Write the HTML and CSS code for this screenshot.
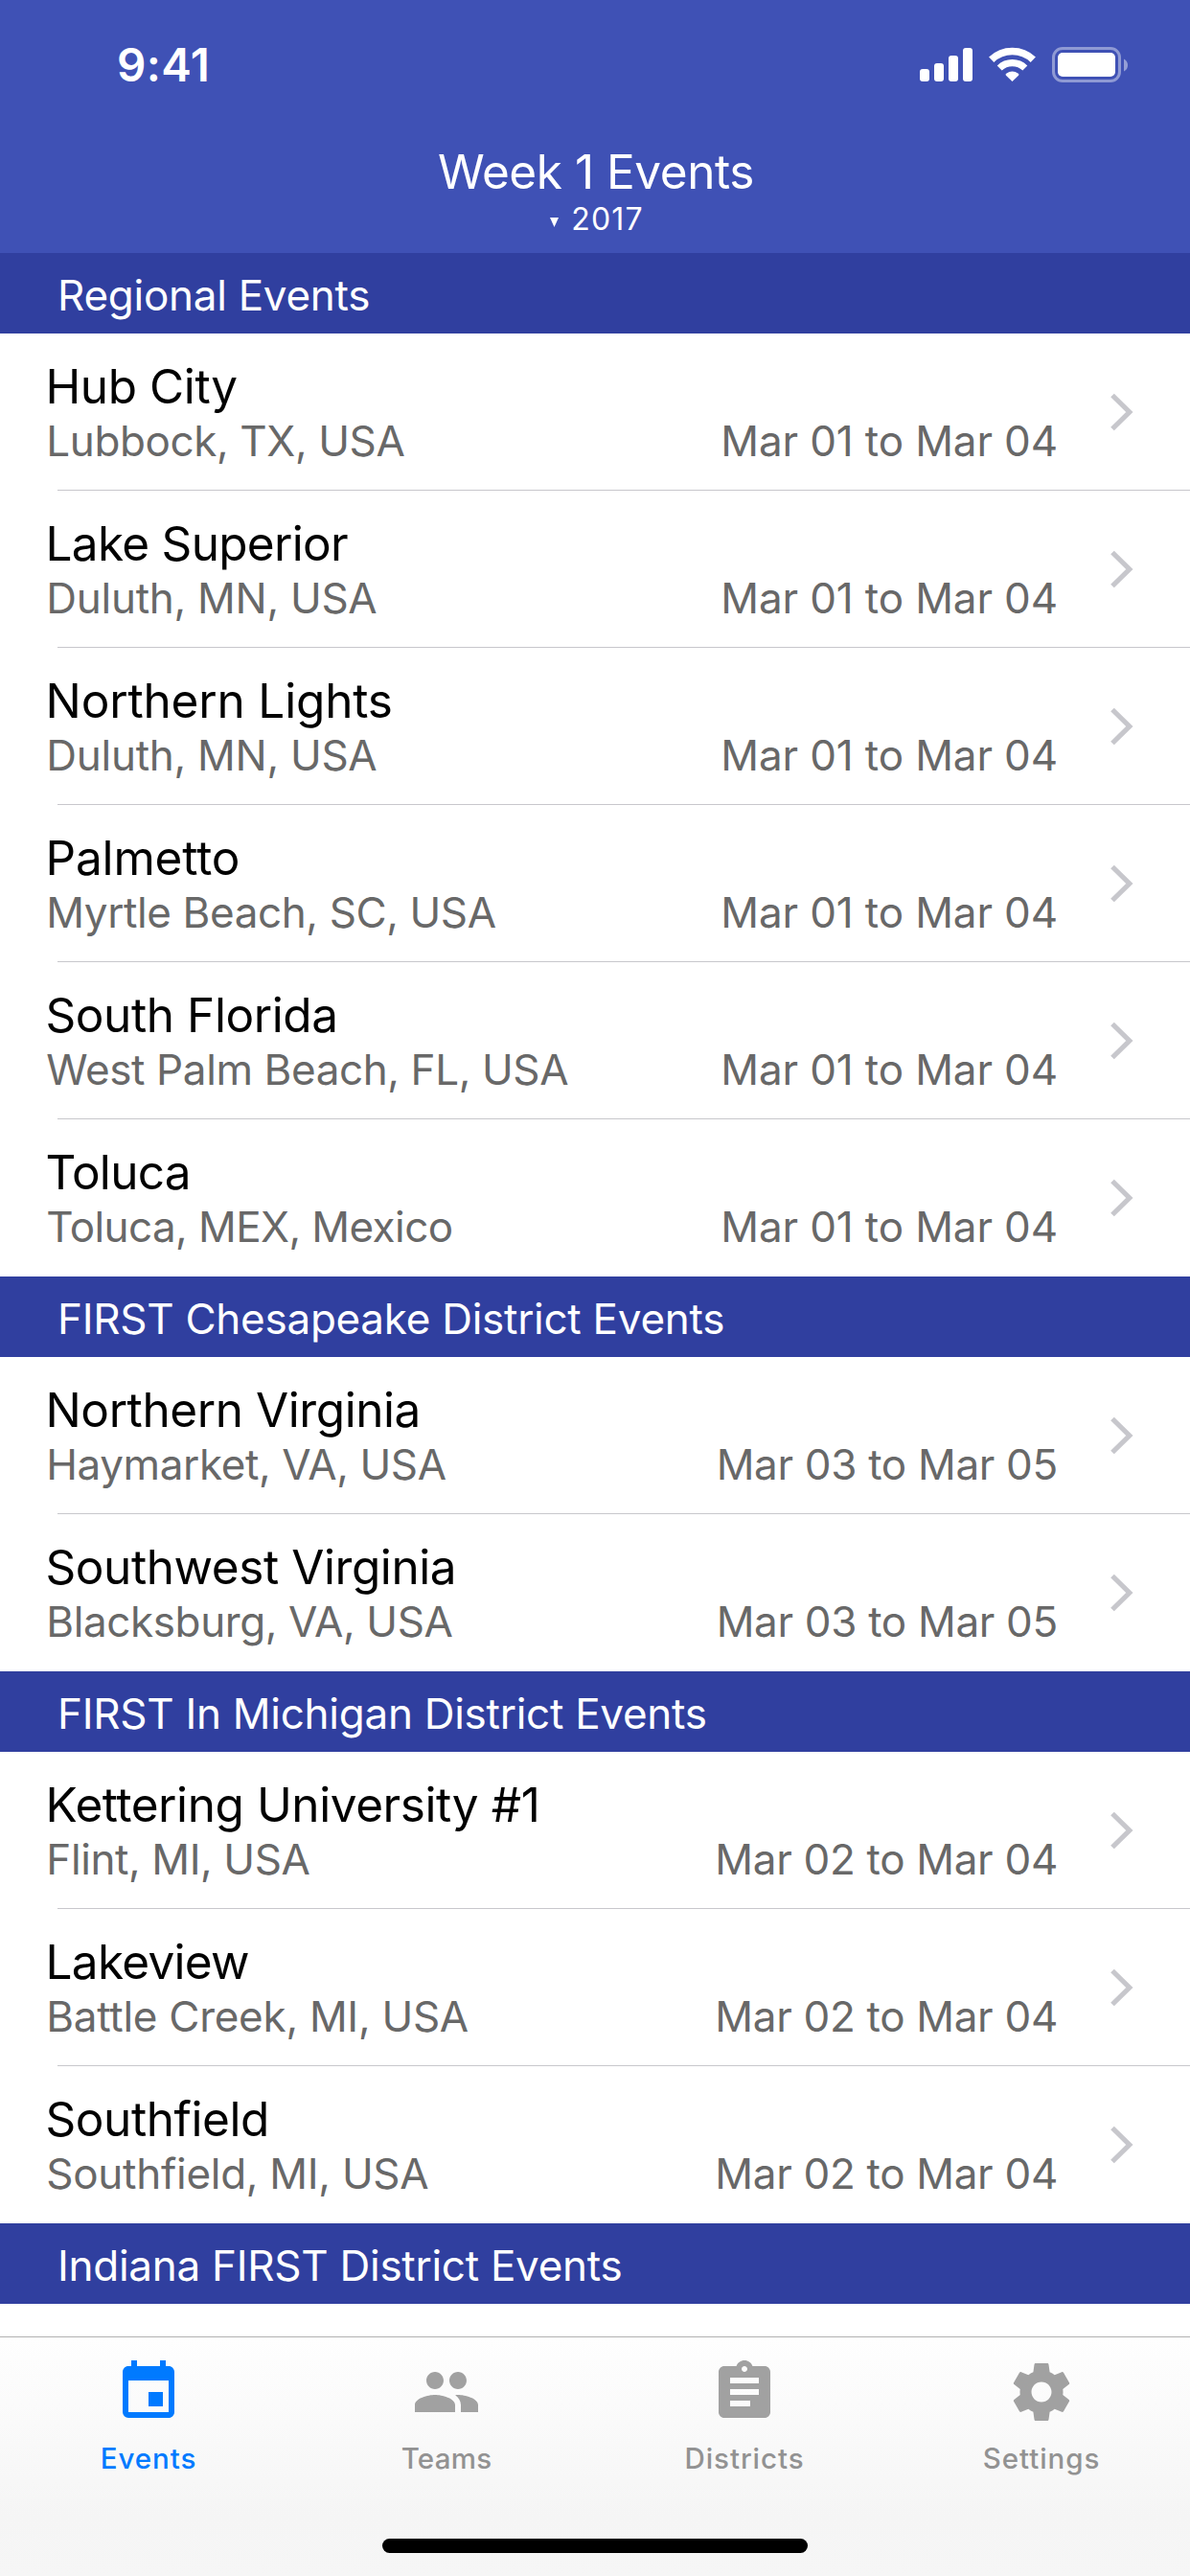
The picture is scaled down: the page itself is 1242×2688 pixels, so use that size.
FILE: index.html
```
<!DOCTYPE html>
<html lang="en">
<head>
<meta charset="utf-8">
<title>Week 1 Events</title>
<link rel="stylesheet" href="styles.css">
</head>
<body>
<svg width="0" height="0" class="defs" aria-hidden="true">
  <symbol id="chevron" viewBox="0 0 24 40"><path d="M2 2.5 19.8 20 2 37.5" fill="none" stroke="currentColor" stroke-width="5.2"/></symbol>
</svg>
<div class="screen">
  <header class="header">
    <div class="status">
      <div class="time">9:41</div>
      <svg class="indicators" width="218" height="38" viewBox="0 0 218 38">
        <g fill="#fff">
          <rect x="0" y="23" width="10" height="13" rx="3"/>
          <rect x="15" y="17" width="10" height="19" rx="3"/>
          <rect x="30" y="9" width="10" height="27" rx="3"/>
          <rect x="45" y="1" width="10" height="35" rx="3"/>
          <path d="M96.500 36 90 29.800Q88.900 28.700 90.200 27.700Q96.500 23.300 102.800 27.700Q104.100 28.700 103 29.800Z"/>
        </g>
        <g fill="none" stroke="#fff">
          <path d="M74.700 13.200A31.500 31.500 0 0 1 118.300 13.200" stroke-width="7.600"/>
          <path d="M83.200 22A19.300 19.300 0 0 1 109.800 22" stroke-width="7.200"/>
        </g>
        <rect x="139.500" y="1.500" width="69" height="34" rx="9.500" fill="none" stroke="#fff" stroke-opacity=".42" stroke-width="3"/>
        <rect x="144" y="6" width="60" height="25" rx="5" fill="#fff"/>
        <path d="M213 12.500Q217 14.500 217 19T213 25.500Z" fill="#fff" fill-opacity=".45"/>
      </svg>
    </div>
    <h1 class="title">Week 1 Events</h1>
    <div class="year"><svg width="9" height="10" viewBox="0 0 9 10"><path d="M0 0h9L4.500 10z" fill="#fff"/></svg><span>2017</span></div>
  </header>

  <main class="list">
    <h2 class="section">Regional Events</h2>
    <ul>
      <li class="row"><span class="name">Hub City</span><div class="meta"><span>Lubbock, TX, USA</span><span class="date wide">Mar 01 to Mar 04</span></div><svg class="chevron"><use href="#chevron"/></svg></li>
      <li class="row"><span class="name tight">Lake Superior</span><div class="meta"><span class="loose">Duluth, MN, USA</span><span class="date wide">Mar 01 to Mar 04</span></div><svg class="chevron"><use href="#chevron"/></svg></li>
      <li class="row"><span class="name loose">Northern Lights</span><div class="meta"><span class="loose">Duluth, MN, USA</span><span class="date wide">Mar 01 to Mar 04</span></div><svg class="chevron"><use href="#chevron"/></svg></li>
      <li class="row"><span class="name loose">Palmetto</span><div class="meta"><span>Myrtle Beach, SC, USA</span><span class="date wide">Mar 01 to Mar 04</span></div><svg class="chevron"><use href="#chevron"/></svg></li>
      <li class="row"><span class="name">South Florida</span><div class="meta"><span>West Palm Beach, FL, USA</span><span class="date wide">Mar 01 to Mar 04</span></div><svg class="chevron"><use href="#chevron"/></svg></li>
      <li class="row"><span class="name tight">Toluca</span><div class="meta"><span class="snug">Toluca, MEX, Mexico</span><span class="date wide">Mar 01 to Mar 04</span></div><svg class="chevron"><use href="#chevron"/></svg></li>
    </ul>
    <h2 class="section">FIRST Chesapeake District Events</h2>
    <ul>
      <li class="row"><span class="name">Northern Virginia</span><div class="meta"><span>Haymarket, VA, USA</span><span class="date">Mar 03 to Mar 05</span></div><svg class="chevron"><use href="#chevron"/></svg></li>
      <li class="row"><span class="name">Southwest Virginia</span><div class="meta"><span>Blacksburg, VA, USA</span><span class="date">Mar 03 to Mar 05</span></div><svg class="chevron"><use href="#chevron"/></svg></li>
    </ul>
    <h2 class="section">FIRST In Michigan District Events</h2>
    <ul>
      <li class="row"><span class="name">Kettering University #1</span><div class="meta"><span>Flint, MI, USA</span><span class="date">Mar 02 to Mar 04</span></div><svg class="chevron"><use href="#chevron"/></svg></li>
      <li class="row"><span class="name tight">Lakeview</span><div class="meta"><span class="loose">Battle Creek, MI, USA</span><span class="date">Mar 02 to Mar 04</span></div><svg class="chevron"><use href="#chevron"/></svg></li>
      <li class="row"><span class="name">Southfield</span><div class="meta"><span class="loose">Southfield, MI, USA</span><span class="date">Mar 02 to Mar 04</span></div><svg class="chevron"><use href="#chevron"/></svg></li>
    </ul>
    <h2 class="section">Indiana FIRST District Events</h2>
  </main>

  <footer class="footer">
    <nav class="tabs">
      <a class="tab active"><svg viewBox="0 0 24 24"><path d="M17 12h-5v5h5zM16 1v2H8V1H6v2H5c-1.110 0-1.990.9-1.990 2L3 19a2 2 0 0 0 2 2h14c1.100 0 2-.9 2-2V5c0-1.100-.9-2-2-2h-1V1h-2zm3 18H5V8h14v11z" /></svg><span>Events</span></a>
      <a class="tab"><svg viewBox="0 0 24 24"><path d="M16 11c1.660 0 2.990-1.340 2.990-3S17.660 5 16 5c-1.660 0-3 1.340-3 3s1.340 3 3 3zm-8 0c1.660 0 2.990-1.340 2.990-3S9.660 5 8 5C6.340 5 5 6.340 5 8s1.340 3 3 3zm0 2c-2.330 0-7 1.170-7 3.500V19h14v-2.500c0-2.330-4.670-3.500-7-3.500zm8 0c-.29 0-.62.020-.97.050 1.160.84 1.970 1.970 1.970 3.450V19h6v-2.500c0-2.330-4.670-3.500-7-3.500z"/></svg><span class="plain">Teams</span></a>
      <a class="tab"><svg viewBox="0 0 24 24"><path d="M19 3h-4.180C14.400 1.840 13.300 1 12 1c-1.300 0-2.400.84-2.820 2H5c-1.100 0-2 .9-2 2v14c0 1.100.9 2 2 2h14c1.100 0 2-.9 2-2V5c0-1.100-.9-2-2-2zm-7 0c.55 0 1 .45 1 1s-.45 1-1 1-1-.45-1-1 .45-1 1-1zm2 14H7v-2h7v2zm3-4H7v-2h10v2zm0-4H7V7h10v2z"/></svg><span>Districts</span></a>
      <a class="tab"><svg viewBox="0 0 24 24"><path d="M19.430 12.980c.040-.320.070-.640.070-.980s-.030-.660-.070-.980l2.110-1.650c.190-.150.240-.420.120-.640l-2-3.460c-.120-.220-.390-.300-.610-.220l-2.490 1c-.520-.400-1.080-.730-1.690-.980l-.380-2.650C14.460 2.180 14.250 2 14 2h-4c-.250 0-.460.180-.490.420l-.380 2.650c-.610.250-1.170.590-1.690.980l-2.490-1c-.230-.090-.490 0-.610.220l-2 3.460c-.130.220-.070.490.120.640l2.110 1.650c-.040.320-.070.650-.070.980s.030.660.070.980l-2.110 1.650c-.190.150-.240.420-.120.640l2 3.460c.120.220.390.300.610.220l2.490-1c.520.400 1.080.730 1.690.980l.380 2.650c.030.240.240.420.490.420h4c.250 0 .460-.180.490-.420l.380-2.650c.610-.250 1.170-.590 1.690-.980l2.490 1c.230.090.490 0 .610-.220l2-3.460c.120-.220.070-.490-.120-.640l-2.110-1.650zM12 15.500c-1.930 0-3.500-1.570-3.500-3.500s1.570-3.500 3.500-3.500 3.500 1.570 3.500 3.500-1.570 3.500-3.500 3.500z"/></svg><span>Settings</span></a>
    </nav>
    <div class="home"></div>
  </footer>
</div>
</body>
</html>
```
FILE: styles.css
```
* { box-sizing: border-box; margin: 0; padding: 0; }

body {
  background: #fff;
  font-family: Inter, "Liberation Sans", sans-serif;
}

.defs { display: none; }

.screen {
  display: flex;
  flex-direction: column;
  width: 1242px;
  height: 2688px;
  overflow: hidden;
}

/* Header */
.header {
  height: 264px;
  background: #3f51b5;
  color: #fff;
}

.status {
  display: flex;
  justify-content: space-between;
  align-items: flex-start;
  height: 149px;
  padding: 38px 64px 0 122px;
}

.time {
  font-size: 47.5px;
  font-weight: 600;
  line-height: 60px;
  letter-spacing: 0.4px;
}

.indicators { margin-top: 11px; }

.title {
  padding-left: 2px;
  font-size: 49.5px;
  font-weight: 400;
  line-height: 60px;
  letter-spacing: -0.45px;
  text-align: center;
}

.year {
  display: flex;
  justify-content: center;
  align-items: center;
  gap: 13px;
  padding-left: 4px;
  font-size: 32px;
  line-height: 40px;
  letter-spacing: 1.2px;
}

.year svg { margin-top: 6px; }

/* Event list */
.list { flex: 1; }

.section {
  height: 84px;
  padding: 4px 60px 0;
  background: #303f9f;
  color: #fff;
  font-size: 44px;
  font-weight: 400;
  line-height: 80px;
  letter-spacing: -0.27px;
}

ul { list-style: none; }

.row {
  display: grid;
  grid-template-columns: 1fr 24px;
  grid-template-rows: 60px 54px;
  column-gap: 55px;
  height: 164px;
  padding: 25px 59px 0 47.5px;
  background: linear-gradient(#c8c7cc, #c8c7cc) 60px 100% / 100% 1px no-repeat;
}

.row:last-child { background: none; }

.name {
  color: #000;
  font-size: 49.5px;
  line-height: 60px;
  letter-spacing: -0.42px;
}

.name.tight { letter-spacing: -0.7px; }
.name.loose { letter-spacing: -0.16px; }

.meta {
  display: flex;
  justify-content: space-between;
  grid-row: 2;
  padding-left: 0.8px;
  color: #686868;
  font-size: 44px;
  line-height: 54px;
  letter-spacing: -0.39px;
}

.meta .snug { letter-spacing: -0.58px; }
.meta .loose { letter-spacing: -0.27px; }
.date { letter-spacing: -0.31px; }
.date.wide { letter-spacing: -0.13px; }

.chevron {
  grid-column: 2;
  grid-row: 1 / 3;
  width: 24px;
  height: 40px;
  margin-top: 37px;
  color: #c7c7cc;
}

/* Tab bar */
.footer {
  display: flex;
  flex-direction: column;
  justify-content: space-between;
  align-items: center;
  height: 250px;
  padding: 21px 0 24px;
  border-top: 1px solid #b2b2b2;
  background: linear-gradient(#fefefe, #f9f9f9 45%, #f5f5f5 75%, #f6f6f6);
}

.tabs {
  display: grid;
  grid-template-columns: 310px 312px 310px 310px;
}

.tab {
  display: flex;
  flex-direction: column;
  align-items: center;
  gap: 15px;
  color: #929292;
  font-size: 29.5px;
  font-weight: 500;
  line-height: 36px;
  letter-spacing: 0.95px;
}

.tab svg {
  width: 72px;
  height: 72px;
  fill: #a1a1a1;
}

.tab .plain { letter-spacing: 0.25px; }

.tab.active { color: #007aff; }
.tab.active svg { fill: #007aff; }

.home {
  width: 444px;
  height: 15px;
  border-radius: 8px;
  background: #000;
}
```
